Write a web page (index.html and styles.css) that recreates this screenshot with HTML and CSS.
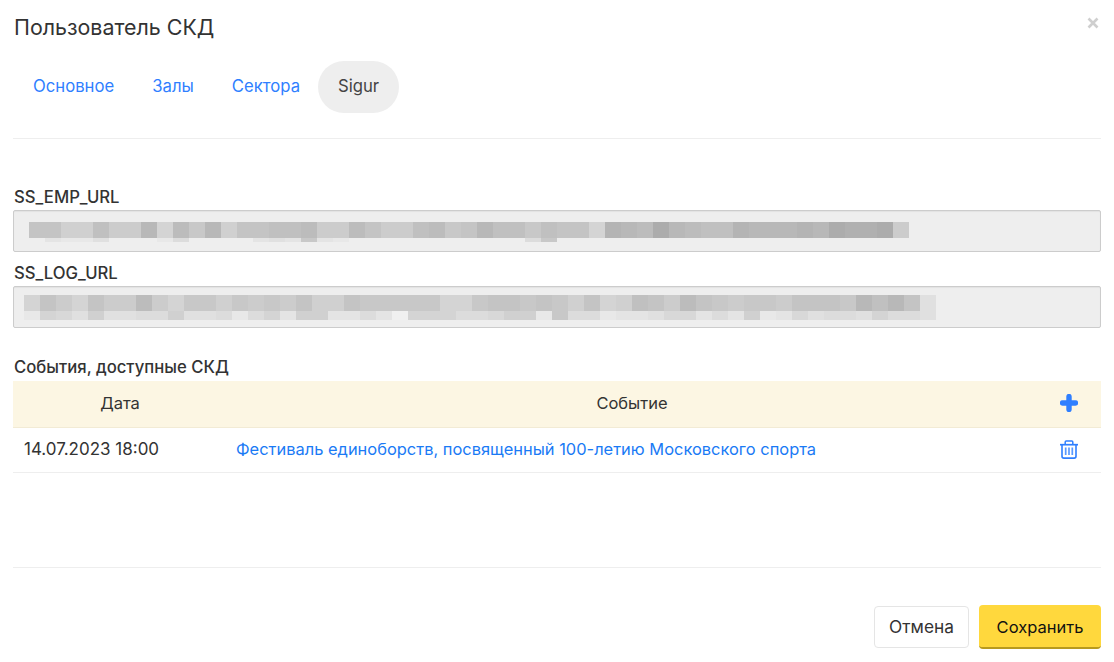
FILE: index.html
```html
<!DOCTYPE html>
<html lang="ru">
<head>
<meta charset="utf-8">
<title>Пользователь СКД</title>
<link rel="stylesheet" href="styles.css">
</head>
<body>
<div class="modal">
  <header class="head">
    <h1 class="title">Пользователь СКД</h1>
    <svg class="close" width="12" height="12" viewBox="0 0 12 12"><path d="M1.500 1.500l9 9M10.500 1.500l-9 9" stroke="#cfcfcf" stroke-width="2.600" fill="none"/></svg>
  </header>
  <nav class="tabs">
    <a class="tab first">Основное</a>
    <a class="tab">Залы</a>
    <a class="tab">Сектора</a>
    <a class="tab active">Sigur</a>
  </nav>
  <section class="form">
    <label class="label">SS_EMP_URL</label>
    <div class="input emp">
      <div class="m-row tall"><i class="g-c4"></i><i class="g-c4"></i><i class="g-d0"></i><i class="g-d0"></i><i class="g-c0"></i><i class="g-cc"></i><i class="g-cc"></i><i class="g-b8"></i><i class="g-d4"></i><i class="g-bc"></i><i class="g-c8"></i><i class="g-b8"></i><i class="g-d0"></i><i class="g-c4"></i><i class="g-c4"></i><i class="g-c0"></i><i class="g-c0"></i><i class="g-bc"></i><i class="g-cc"></i><i class="g-cc"></i><i class="g-bc"></i><i class="g-c4"></i><i class="g-cc"></i><i class="g-cc"></i><i class="g-c0"></i><i class="g-bc"></i><i class="g-c8"></i><i class="g-c4"></i><i class="g-b8"></i><i class="g-c0"></i><i class="g-c0"></i><i class="g-c8"></i><i class="g-c0"></i><i class="g-c4"></i><i class="g-c4"></i><i class="g-d4"></i><i class="g-b4"></i><i class="g-b8"></i><i class="g-bc"></i><i class="g-ac"></i><i class="g-b8"></i><i class="g-bc"></i><i class="g-c0"></i><i class="g-c0"></i><i class="g-b4"></i><i class="g-b8"></i><i class="g-b8"></i><i class="g-b8"></i><i class="g-b4"></i><i class="g-b8"></i><i class="g-ac"></i><i class="g-b0"></i><i class="g-b0"></i><i class="g-ac"></i><i class="g-cc"></i></div>
      <div class="m-row low"><i></i><i class="g-e4"></i><i class="g-e8"></i><i class="g-e8"></i><i class="g-e0"></i><i></i><i></i><i></i><i class="g-e8"></i><i class="g-dc"></i><i></i><i></i><i></i><i></i><i class="g-e4"></i><i class="g-e0"></i><i class="g-e4"></i><i class="g-c8"></i><i class="g-e4"></i><i class="g-e8"></i><i></i><i></i><i></i><i></i><i></i><i></i><i></i><i></i><i></i><i></i><i></i><i class="g-dc"></i><i class="g-c8"></i></div>
    </div>
    <label class="label">SS_LOG_URL</label>
    <div class="input log">
      <div class="m-row tall"><i class="g-d4"></i><i class="g-c4"></i><i class="g-cc"></i><i class="g-d4"></i><i class="g-c4"></i><i class="g-cc"></i><i class="g-cc"></i><i class="g-bc"></i><i class="g-cc"></i><i class="g-d4"></i><i class="g-c8"></i><i class="g-c8"></i><i class="g-d0"></i><i class="g-c8"></i><i class="g-cc"></i><i class="g-c8"></i><i class="g-cc"></i><i class="g-c4"></i><i class="g-d0"></i><i class="g-d0"></i><i class="g-c4"></i><i class="g-c8"></i><i class="g-c8"></i><i class="g-c8"></i><i class="g-c8"></i><i class="g-c8"></i><i class="g-d4"></i><i class="g-d4"></i><i class="g-c8"></i><i class="g-c4"></i><i class="g-c4"></i><i class="g-c8"></i><i class="g-c4"></i><i class="g-c8"></i><i class="g-d0"></i><i class="g-c4"></i><i class="g-d4"></i><i class="g-d0"></i><i class="g-c0"></i><i class="g-c4"></i><i class="g-cc"></i><i class="g-bc"></i><i class="g-c4"></i><i class="g-c8"></i><i class="g-cc"></i><i class="g-c8"></i><i class="g-c8"></i><i class="g-cc"></i><i class="g-c4"></i><i class="g-c4"></i><i class="g-c4"></i><i class="g-c8"></i><i class="g-b8"></i><i class="g-c0"></i><i class="g-b8"></i><i class="g-c4"></i><i class="g-e0"></i></div>
      <div class="m-row high"><i class="g-e8"></i><i class="g-d4"></i><i class="g-d8"></i><i class="g-e0"></i><i class="g-d0"></i><i class="g-e0"></i><i class="g-e0"></i><i class="g-dc"></i><i class="g-dc"></i><i class="g-d0"></i><i class="g-e0"></i><i class="g-e0"></i><i class="g-dc"></i><i class="g-e8"></i><i class="g-dc"></i><i class="g-d4"></i><i class="g-e4"></i><i class="g-d0"></i><i class="g-d0"></i><i class="g-e4"></i><i class="g-e4"></i><i class="g-dc"></i><i class="g-e4"></i><i class="g-f0"></i><i class="g-d4"></i><i class="g-d4"></i><i class="g-d4"></i><i class="g-dc"></i><i class="g-dc"></i><i class="g-d8"></i><i class="g-d0"></i><i class="g-d0"></i><i class="g-e8"></i><i class="g-c8"></i><i class="g-dc"></i><i class="g-dc"></i><i class="g-e8"></i><i class="g-e4"></i><i class="g-e4"></i><i class="g-e0"></i><i class="g-d8"></i><i class="g-d8"></i><i class="g-e4"></i><i class="g-dc"></i><i class="g-e4"></i><i class="g-d0"></i><i class="g-e8"></i><i class="g-e4"></i><i class="g-d8"></i><i class="g-e0"></i><i class="g-dc"></i><i class="g-dc"></i><i class="g-e0"></i><i class="g-d4"></i><i class="g-dc"></i><i class="g-dc"></i><i class="g-e0"></i></div>
    </div>
  </section>
  <h2 class="label events">События, доступные СКД</h2>
  <div class="row thead">
    <div class="c-date center">Дата</div>
    <div class="c-ev center">Событие</div>
    <div class="c-act"><svg width="18" height="18" viewBox="0 0 18 18"><path d="M9 2.500v13M2.500 9h13" stroke="#2f7fff" stroke-width="5.400" stroke-linecap="round" fill="none"/></svg></div>
  </div>
  <div class="row tbody">
    <div class="c-date cellpad date-text">14.07.2023 18:00</div>
    <div class="c-ev linkcell"><a class="link">Фестиваль единоборств, посвященный 100-летию Московского спорта</a></div>
    <div class="c-act"><svg width="18" height="19" viewBox="0 0 18 19" fill="none" stroke="#2f7fff"><path d="M0 4.700h18" stroke-width="1.700"/><path d="M5.200 4V1.900c0-.6.4-1 1-1h5.600c.6 0 1 .4 1 1V4" stroke-width="1.500"/><path d="M2 5v11.200c0 1.200.8 1.900 1.900 1.900h10.200c1.100 0 1.900-.7 1.900-1.900V5" stroke-width="1.600"/><path d="M5.700 7.500v7.500M9 7.500v7.500M12.300 7.500v7.500" stroke-width="1.700" opacity=".8"/></svg></div>
  </div>
  <footer class="foot">
    <button class="btn cancel">Отмена</button>
    <button class="btn save">Сохранить</button>
  </footer>
</div>
</body>
</html>
```
FILE: styles.css
```css
*{box-sizing:border-box}
html,body{margin:0;padding:0;background:#fff}
body{font-family:"Inter","Roboto",sans-serif;color:#333;font-size:16.500px}
.modal{width:1114px;height:662px;padding:0 13px;overflow:hidden}
.head{display:flex;justify-content:space-between;height:61px;padding-top:12px}
.title{margin:0 0 0 1px;font-size:21.400px;font-weight:400;line-height:30px;color:#333}
.close{margin:5px 2px 0 0}
.tabs{display:flex;height:78px;align-items:flex-start;border-bottom:1px solid #eee}
.tab{height:52px;line-height:50px;padding:0 19px;color:#2f7fff;font-size:16.700px;border-radius:26px}
.first{margin-left:1px}
.active{color:#444;background:#eee;margin-left:-1px;padding:0 20px}
.form{padding-top:46px}
.label{display:block;margin:0 0 0 1px;font-size:16.700px;font-weight:500;line-height:25px;color:#333}
.input{height:42px;background:#eee;border:1px solid #ccc;border-radius:2px;margin-bottom:9px;box-shadow:inset 0 1px 1px rgba(0,0,0,.05)}
.emp{padding:11px 0 0 15px}
.log{padding:8px 0 0 10px}
.m-row{display:flex}
.m-row i{flex:0 0 16px;display:block}
.tall{height:16px}
.low{height:4px}
.high{height:9px}
.g-ac{background:#acacac}.g-b0{background:#b0b0b0}.g-b4{background:#b4b4b4}.g-b8{background:#b8b8b8}
.g-bc{background:#bcbcbc}.g-c0{background:#c0c0c0}.g-c4{background:#c4c4c4}.g-c8{background:#c8c8c8}
.g-cc{background:#cccccc}.g-d0{background:#d0d0d0}.g-d4{background:#d4d4d4}.g-d8{background:#d8d8d8}
.g-dc{background:#dcdcdc}.g-e0{background:#e0e0e0}.g-e4{background:#e4e4e4}.g-e8{background:#e8e8e8}
.g-f0{background:#f0f0f0}
.events{margin-top:30px;height:23px;line-height:18px}
.row{display:flex;align-items:center;padding-bottom:2px}
.thead{height:47px;background:#fcf6e3;border-bottom:1px solid #f2ebd5}
.tbody{height:45px;border-bottom:1px solid #eee}
.c-date{width:214px}
.c-ev{flex:1}
.c-act{width:64px;display:flex;justify-content:center}
.center{text-align:center}
.cellpad{padding-left:11px}
.date-text{font-size:17px}
.linkcell{padding-left:9px}
.link{color:#1a7af5;font-size:16.450px}
.foot{display:flex;justify-content:flex-end;align-items:center;gap:10px;margin-top:94px;padding-top:37px;border-top:1px solid #eee}
.btn{font:inherit;border-radius:4px;padding:0}
.cancel{width:95px;height:42px;background:#fff;border:1px solid #e5e5e5;color:#333;font-size:17.300px;padding-bottom:2px}
.save{width:122px;height:44px;background:#ffd83d;border:0;border-bottom:2px solid #b89a1e;color:#111;padding-top:2px}
```
